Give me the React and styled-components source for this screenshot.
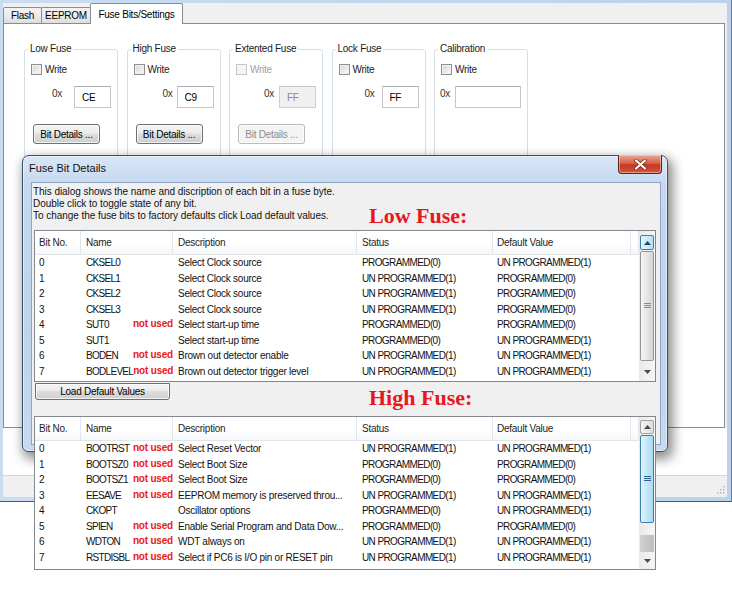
import React from "react";
import styled, { createGlobalStyle } from "styled-components";

const GlobalStyle = createGlobalStyle`
  html, body {
    margin: 0;
    padding: 0;
    background: #ffffff;
  }
  body {
    font-family: "Liberation Sans", Arial, sans-serif;
    font-size: 10px;
    letter-spacing: -0.25px;
    color: #000;
  }
  * {
    box-sizing: border-box;
  }
`;

const Desktop = styled.div`
  position: relative;
  width: 732px;
  height: 600px;
  overflow: hidden;
  background: #fff;
`;

/* ---------- main window ---------- */

const MainWindow = styled.div`
  width: 732px;
  height: 502px;
  padding: 3px 4px 4px 3px;
  background: linear-gradient(to right, #c9dcf2, #bcd2ec);
  border-right: 1px solid #5d7ea6;
  border-bottom: 1px solid #3f5a80;
  display: flex;
`;

const Client = styled.div`
  flex: 1;
  display: flex;
  flex-direction: column;
  background: #f0f0f0;
`;

const TabStrip = styled.div`
  height: 20px;
  display: flex;
  align-items: flex-end;
`;

const Tab = styled.div`
  position: relative;
  z-index: ${(p) => (p.$active ? 2 : 1)};
  width: ${(p) => p.$w}px;
  height: ${(p) => (p.$active ? 21 : 16)}px;
  margin-bottom: ${(p) => (p.$active ? -1 : 0)}px;
  margin-left: ${(p) => (p.$first ? 0 : -1)}px;
  border: 1px solid #898c95;
  border-bottom: none;
  border-radius: 2px 2px 0 0;
  background: ${(p) =>
    p.$active ? "#ffffff" : "linear-gradient(#f3f3f3, #ebebeb 50%, #dedede)"};
  display: flex;
  align-items: center;
  justify-content: center;
  color: #000;
`;

const TabPanel = styled.div`
  height: 405px;
  margin-right: 2px;
  background: #fff;
  border: 1px solid #898c95;
  padding: 19px 0 0 20px;
  display: flex;
  align-items: flex-start;
  gap: 8.5px;
`;

const GroupBox = styled.fieldset`
  width: 94px;
  height: 130px;
  min-width: 0;
  margin: 0;
  padding: 8px 6px 0 6px;
  border: 1px solid #d5dfe5;
  border-radius: 3px;
  display: flex;
  flex-direction: column;
`;

const Legend = styled.legend`
  padding: 0 2px;
  margin-left: -3px;
  line-height: 12px;
  color: #1b1b1b;
`;

const CheckRow = styled.div`
  height: 13px;
  display: flex;
  align-items: center;
  gap: 3px;
  color: ${(p) => (p.$disabled ? "#a0a0a0" : "#1b1b1b")};
`;

const CheckBox = styled.span`
  width: 11px;
  height: 11px;
  border: 1px solid ${(p) => (p.$disabled ? "#c5c5c5" : "#8e8f8f")};
  background: ${(p) =>
    p.$disabled ? "#f4f4f4" : "linear-gradient(135deg, #d6d6d6, #f9f9f9)"};
  box-shadow: inset 0 0 0 1px ${(p) => (p.$disabled ? "#f7f7f7" : "#f1f1f1")};
`;

const HexRow = styled.div`
  margin-top: 10px;
  display: flex;
  justify-content: flex-end;
  align-items: flex-start;
`;

const HexLabel = styled.span`
  margin-top: 2px;
  margin-right: ${(p) => p.$gap}px;
  line-height: 12px;
  color: #333;
`;

const HexInput = styled.input`
  width: ${(p) => p.$w}px;
  height: 22px;
  margin: 0;
  padding: 0 0 0 7px;
  border: 1px solid ${(p) => (p.$disabled ? "#cfcfcf" : "#c3c6cc")};
  border-top-color: ${(p) => (p.$disabled ? "#c6c6c6" : "#a9acb2")};
  background: ${(p) => (p.$disabled ? "#f0f0f0" : "#fff")};
  font-family: "Liberation Sans", Arial, sans-serif;
  font-size: 10px;
  letter-spacing: -0.25px;
  color: ${(p) => (p.$disabled ? "#8a8a8a" : "#000")};
  outline: none;
`;

const WinButton = styled.div`
  width: ${(p) => p.$w}px;
  height: ${(p) => p.$h}px;
  border: 1px solid ${(p) => (p.$disabled ? "#b7bbbe" : "#707070")};
  border-radius: 3px;
  background: ${(p) =>
    p.$disabled
      ? "#f4f4f4"
      : "linear-gradient(#f4f4f4, #ececec 45%, #dddddd 50%, #cfcfcf)"};
  box-shadow: inset 0 0 0 1px rgba(255, 255, 255, 0.75);
  color: ${(p) => (p.$disabled ? "#8d8d8d" : "#000")};
  display: flex;
  align-items: center;
  justify-content: center;
  white-space: nowrap;
`;

const DetailsButton = styled(WinButton)`
  margin-top: 16px;
  margin-left: 2px;
`;

const LowerPane = styled.div`
  height: 48px;
  background: #fff;
  border-bottom: 1px solid #d6d6d6;
`;

const StatusBar = styled.div`
  flex: 1;
  display: flex;
  justify-content: flex-end;
  align-items: flex-end;
  padding: 0 2px 3px 0;
  background: #f0f0f0;
`;

/* ---------- dialog ---------- */

const Dialog = styled.div`
  position: absolute;
  left: 22px;
  top: 155px;
  width: 646px;
  height: 297px;
  border: 1px solid #3a4b63;
  border-radius: 7px 7px 6px 6px;
  background: linear-gradient(#d8e6f7, #c4d8f0 30px, #bfd3ed 60%, #c6d9f0);
  box-shadow: inset 0 0 0 1px rgba(255, 255, 255, 0.55),
    3px 5px 12px 2px rgba(0, 0, 0, 0.45);
  display: flex;
  flex-direction: column;
`;

const TitleBar = styled.div`
  height: 26px;
  padding-left: 6px;
  display: flex;
  justify-content: space-between;
  align-items: flex-start;
`;

const TitleText = styled.span`
  margin-top: 6px;
  font-size: 11px;
  letter-spacing: 0;
  color: #111;
`;

const CloseButton = styled.div`
  width: 44px;
  height: 19px;
  margin-top: -1px;
  margin-right: 5px;
  border: 1px solid #5e2218;
  border-top: none;
  border-radius: 0 0 4px 4px;
  background: linear-gradient(#eaa796, #d7634b 45%, #c5381f 55%, #d2583c);
  box-shadow: inset 0 0 0 1px rgba(255, 220, 210, 0.5);
  display: flex;
  align-items: center;
  justify-content: center;
`;

const DialogClient = styled.div`
  height: 263px;
  margin: 0 6px 6px 8px;
  border: 1px solid #8ea4c0;
  background: #f0f0f0;
  display: flex;
  flex-direction: column;
`;

const IntroRow = styled.div`
  height: 47px;
  padding: 3px 0 0 1px;
  display: flex;
`;

const IntroText = styled.div`
  flex: 0 0 336px;
  line-height: 12px;
  letter-spacing: -0.05px;
  white-space: nowrap;
  color: #111;
`;

const FuseHeading = styled.div`
  align-self: ${(p) => (p.$bottom ? "flex-end" : "flex-start")};
  margin: ${(p) => (p.$bottom ? "0 0 3px 0" : "5px 0 0 199px")};
  font-family: "Liberation Serif", "Times New Roman", serif;
  font-weight: bold;
  font-size: 22px;
  line-height: 22px;
  letter-spacing: 0;
  color: #e8161e;
`;

const TableSlot = styled.div`
  margin-left: 2px;
`;

const BottomRow = styled.div`
  display: flex;
  align-items: flex-start;
`;

const LoadButton = styled(WinButton)`
  margin: 1px 0 0 3px;
  border-radius: 0 0 3px 3px;
`;

const Overlay = styled.div`
  position: absolute;
  left: 34px;
  top: 416px;
  z-index: 5;
`;

/* ---------- list view ---------- */

const ListFrame = styled.div`
  width: 622px;
  height: ${(p) => p.$h}px;
  border: 1px solid #828790;
  background: #fff;
  display: flex;
`;

const ListBody = styled.div`
  flex: 1;
  min-width: 0;
  display: flex;
  flex-direction: column;
`;

const HeaderRow = styled.div`
  height: 24px;
  display: flex;
  background: linear-gradient(#ffffff, #ffffff 55%, #f4f6f8);
  border-bottom: 1px solid #e2e4e7;
`;

const HeaderCell = styled.div`
  flex: 0 0 ${(p) => p.$w}px;
  padding-left: ${(p) => p.$pad}px;
  border-right: 1px solid #e3e6ea;
  display: flex;
  align-items: center;
  color: #1e1e1e;
`;

const Row = styled.div`
  height: 15.5px;
  display: flex;
  line-height: 15.5px;
`;

const Cell = styled.div`
  flex: 0 0 ${(p) => p.$w}px;
  min-width: 0;
  padding-left: ${(p) => p.$pad}px;
  white-space: nowrap;
  overflow: hidden;
  letter-spacing: ${(p) => (p.$caps ? "-0.6px" : "-0.25px")};
  color: #111;
`;

const NameCell = styled(Cell)`
  display: flex;
  letter-spacing: -0.7px;
`;

const NameText = styled.span`
  flex: none;
`;

const NotUsed = styled.span`
  flex: none;
  margin-left: auto;
  font-weight: bold;
  letter-spacing: -0.2px;
  color: #ec1820;
  transform: translateY(-1px);
`;

const ScrollBar = styled.div`
  flex: 0 0 16px;
  padding: ${(p) => p.$pad};
  background: linear-gradient(to right, #e9e9e9, #f6f6f6);
  display: flex;
  flex-direction: column;
  align-items: center;
`;

const ArrowBox = styled.div`
  width: 14px;
  height: ${(p) => p.$h}px;
  border: 1px solid
    ${(p) =>
      p.$look === "hover" ? "#3c7fb1" : p.$look === "box" ? "#a2a2a2" : "transparent"};
  border-radius: 2px;
  background: ${(p) =>
    p.$look === "hover"
      ? "linear-gradient(to right, #e5f4fc, #b7dff6)"
      : p.$look === "box"
      ? "linear-gradient(to right, #f3f3f3, #dedede)"
      : "transparent"};
  display: flex;
  align-items: center;
  justify-content: center;
`;

const Thumb = styled.div`
  width: 14px;
  height: ${(p) => p.$h}px;
  margin-top: ${(p) => p.$top}px;
  border: 1px solid ${(p) => (p.$hover ? "#3c7fb1" : "#979797")};
  border-radius: 2px;
  background: ${(p) =>
    p.$hover
      ? "linear-gradient(to right, #e3f4fc, #c4e6f8 50%, #a9d9f3)"
      : "linear-gradient(to right, #f5f5f5, #e6e6e6 50%, #d5d5d5)"};
  display: flex;
  align-items: center;
  justify-content: center;
`;

const PressedTrack = styled.div`
  width: 14px;
  height: 17px;
  margin-top: 12px;
  background: linear-gradient(to right, #d2d2d2, #bdbdbd);
`;

const Spacer = styled.div`
  flex: 1;
`;

/* ---------- data ---------- */

const columns = [
  { key: "bit", label: "Bit No.", w: 46, pad: 4 },
  { key: "name", label: "Name", w: 92, pad: 5 },
  { key: "desc", label: "Description", w: 184, pad: 5 },
  { key: "status", label: "Status", w: 136, pad: 5 },
  { key: "def", label: "Default Value", w: 138, pad: 4 },
];

const P0 = "PROGRAMMED(0)";
const U1 = "UN PROGRAMMED(1)";

const lowRows = [
  ["0", "CKSEL0", false, "Select Clock source", P0, U1],
  ["1", "CKSEL1", false, "Select Clock source", U1, P0],
  ["2", "CKSEL2", false, "Select Clock source", U1, P0],
  ["3", "CKSEL3", false, "Select Clock source", U1, P0],
  ["4", "SUT0", true, "Select start-up time", P0, P0],
  ["5", "SUT1", false, "Select start-up time", P0, U1],
  ["6", "BODEN", true, "Brown out detector enable", U1, U1],
  ["7", "BODLEVEL", true, "Brown out detector trigger level", U1, U1],
];

const highRows = [
  ["0", "BOOTRST", true, "Select Reset Vector", U1, U1],
  ["1", "BOOTSZ0", true, "Select Boot Size", P0, P0],
  ["2", "BOOTSZ1", true, "Select Boot Size", P0, P0],
  ["3", "EESAVE", true, "EEPROM memory is preserved throu...", U1, U1],
  ["4", "CKOPT", false, "Oscillator options", P0, U1],
  ["5", "SPIEN", true, "Enable Serial Program and Data Dow...", P0, P0],
  ["6", "WDTON", true, "WDT always on", U1, U1],
  ["7", "RSTDISBL", true, "Select if PC6 is I/O pin or RESET pin", U1, U1],
];

const fuses = [
  { title: "Low Fuse", value: "CE", gap: 12, w: 37, button: true },
  { title: "High Fuse", value: "C9", gap: 4, w: 37, button: true },
  { title: "Extented Fuse", value: "FF", gap: 5, w: 37, button: true, disabled: true },
  { title: "Lock Fuse", value: "FF", gap: 7, w: 37 },
  { title: "Calibration", value: "", gap: 5, w: 66 },
];

/* ---------- small drawings ---------- */

const Arrow = ({ down, color = "#4a4a4a" }) => (
  <svg width="7" height="4" viewBox="0 0 7 4">
    <polygon
      points={down ? "0,0 7,0 3.5,4" : "0,4 7,4 3.5,0"}
      fill={color}
    />
  </svg>
);

const Grip = ({ color }) => (
  <svg width="7" height="6" viewBox="0 0 7 6">
    {[0, 2, 4].map((y) => (
      <rect key={y} x="0" y={y} width="7" height="1" fill={color} />
    ))}
  </svg>
);

const CloseGlyph = () => (
  <svg width="13" height="11" viewBox="0 0 13 11">
    <path d="M2 1.5 L11 9.5 M11 1.5 L2 9.5" stroke="#6a2416" strokeWidth="3.6" strokeLinecap="round" />
    <path d="M2 1.5 L11 9.5 M11 1.5 L2 9.5" stroke="#ffffff" strokeWidth="2.2" strokeLinecap="round" />
  </svg>
);

const SizeGrip = () => (
  <svg width="10" height="10" viewBox="0 0 10 10">
    {[
      [8, 2],
      [5, 5],
      [8, 5],
      [2, 8],
      [5, 8],
      [8, 8],
    ].map(([x, y]) => (
      <rect key={`${x}-${y}`} x={x} y={y} width="1.5" height="1.5" fill="#b5b5b5" />
    ))}
  </svg>
);

/* ---------- composed parts ---------- */

const FuseGroup = ({ fuse }) => (
  <GroupBox>
    <Legend>{fuse.title}</Legend>
    <CheckRow $disabled={fuse.disabled}>
      <CheckBox $disabled={fuse.disabled} />
      Write
    </CheckRow>
    <HexRow>
      <HexLabel $gap={fuse.gap}>0x</HexLabel>
      <HexInput
        readOnly
        value={fuse.value}
        $w={fuse.w}
        $disabled={fuse.disabled}
      />
    </HexRow>
    {fuse.button && (
      <DetailsButton $w={67} $h={20} $disabled={fuse.disabled}>
        Bit Details ...
      </DetailsButton>
    )}
  </GroupBox>
);

const ListView = ({ rows, height, high }) => (
  <ListFrame $h={height}>
    <ListBody>
      <HeaderRow>
        {columns.map((c) => (
          <HeaderCell key={c.key} $w={c.w} $pad={c.pad}>
            {c.label}
          </HeaderCell>
        ))}
        <HeaderCell $w={8} $pad={0} />
      </HeaderRow>
      {rows.map(([bit, name, unused, desc, status, def]) => (
        <Row key={bit}>
          <Cell $w={46} $pad={4}>
            {bit}
          </Cell>
          <NameCell $w={92} $pad={5}>
            <NameText>{name}</NameText>
            {unused && <NotUsed>not used</NotUsed>}
          </NameCell>
          <Cell $w={184} $pad={5}>
            {desc}
          </Cell>
          <Cell $w={136} $pad={5} $caps>
            {status}
          </Cell>
          <Cell $w={138} $pad={4} $caps>
            {def}
          </Cell>
        </Row>
      ))}
    </ListBody>
    {high ? (
      <ScrollBar $pad="3px 0 1px">
        <ArrowBox $look="box" $h={14}>
          <Arrow />
        </ArrowBox>
        <Thumb $hover $h={88} $top={1}>
          <Grip color="#2f6590" />
        </Thumb>
        <PressedTrack />
        <Spacer />
        <ArrowBox $look="none" $h={14}>
          <Arrow down />
        </ArrowBox>
      </ScrollBar>
    ) : (
      <ScrollBar $pad="4px 0 2px">
        <ArrowBox $look="hover" $h={15}>
          <Arrow color="#1c4a70" />
        </ArrowBox>
        <Thumb $h={110} $top={1}>
          <Grip color="#8a8a8a" />
        </Thumb>
        <Spacer />
        <ArrowBox $look="none" $h={15}>
          <Arrow down />
        </ArrowBox>
      </ScrollBar>
    )}
  </ListFrame>
);

const App = () => (
  <>
    <GlobalStyle />
    <Desktop>
      <MainWindow>
        <Client>
          <TabStrip>
            <Tab $first $w={39}>
              Flash
            </Tab>
            <Tab $w={50}>EEPROM</Tab>
            <Tab $active $w={93}>
              Fuse Bits/Settings
            </Tab>
          </TabStrip>
          <TabPanel>
            {fuses.map((f) => (
              <FuseGroup key={f.title} fuse={f} />
            ))}
          </TabPanel>
          <LowerPane />
          <StatusBar>
            <SizeGrip />
          </StatusBar>
        </Client>
      </MainWindow>

      <Dialog>
        <TitleBar>
          <TitleText>Fuse Bit Details</TitleText>
          <CloseButton>
            <CloseGlyph />
          </CloseButton>
        </TitleBar>
        <DialogClient>
          <IntroRow>
            <IntroText>
              <div>This dialog shows the name and discription of each bit in a fuse byte.</div>
              <div>Double click to toggle state of any bit.</div>
              <div>To change the fuse bits to factory defaults click Load default values.</div>
            </IntroText>
            <FuseHeading $bottom>Low Fuse:</FuseHeading>
          </IntroRow>
          <TableSlot>
            <ListView rows={lowRows} height={152} />
          </TableSlot>
          <BottomRow>
            <LoadButton $w={135} $h={17}>
              Load Default Values
            </LoadButton>
            <FuseHeading>High Fuse:</FuseHeading>
          </BottomRow>
        </DialogClient>
      </Dialog>

      <Overlay>
        <ListView rows={highRows} height={154} high />
      </Overlay>
    </Desktop>
  </>
);

export default App;
